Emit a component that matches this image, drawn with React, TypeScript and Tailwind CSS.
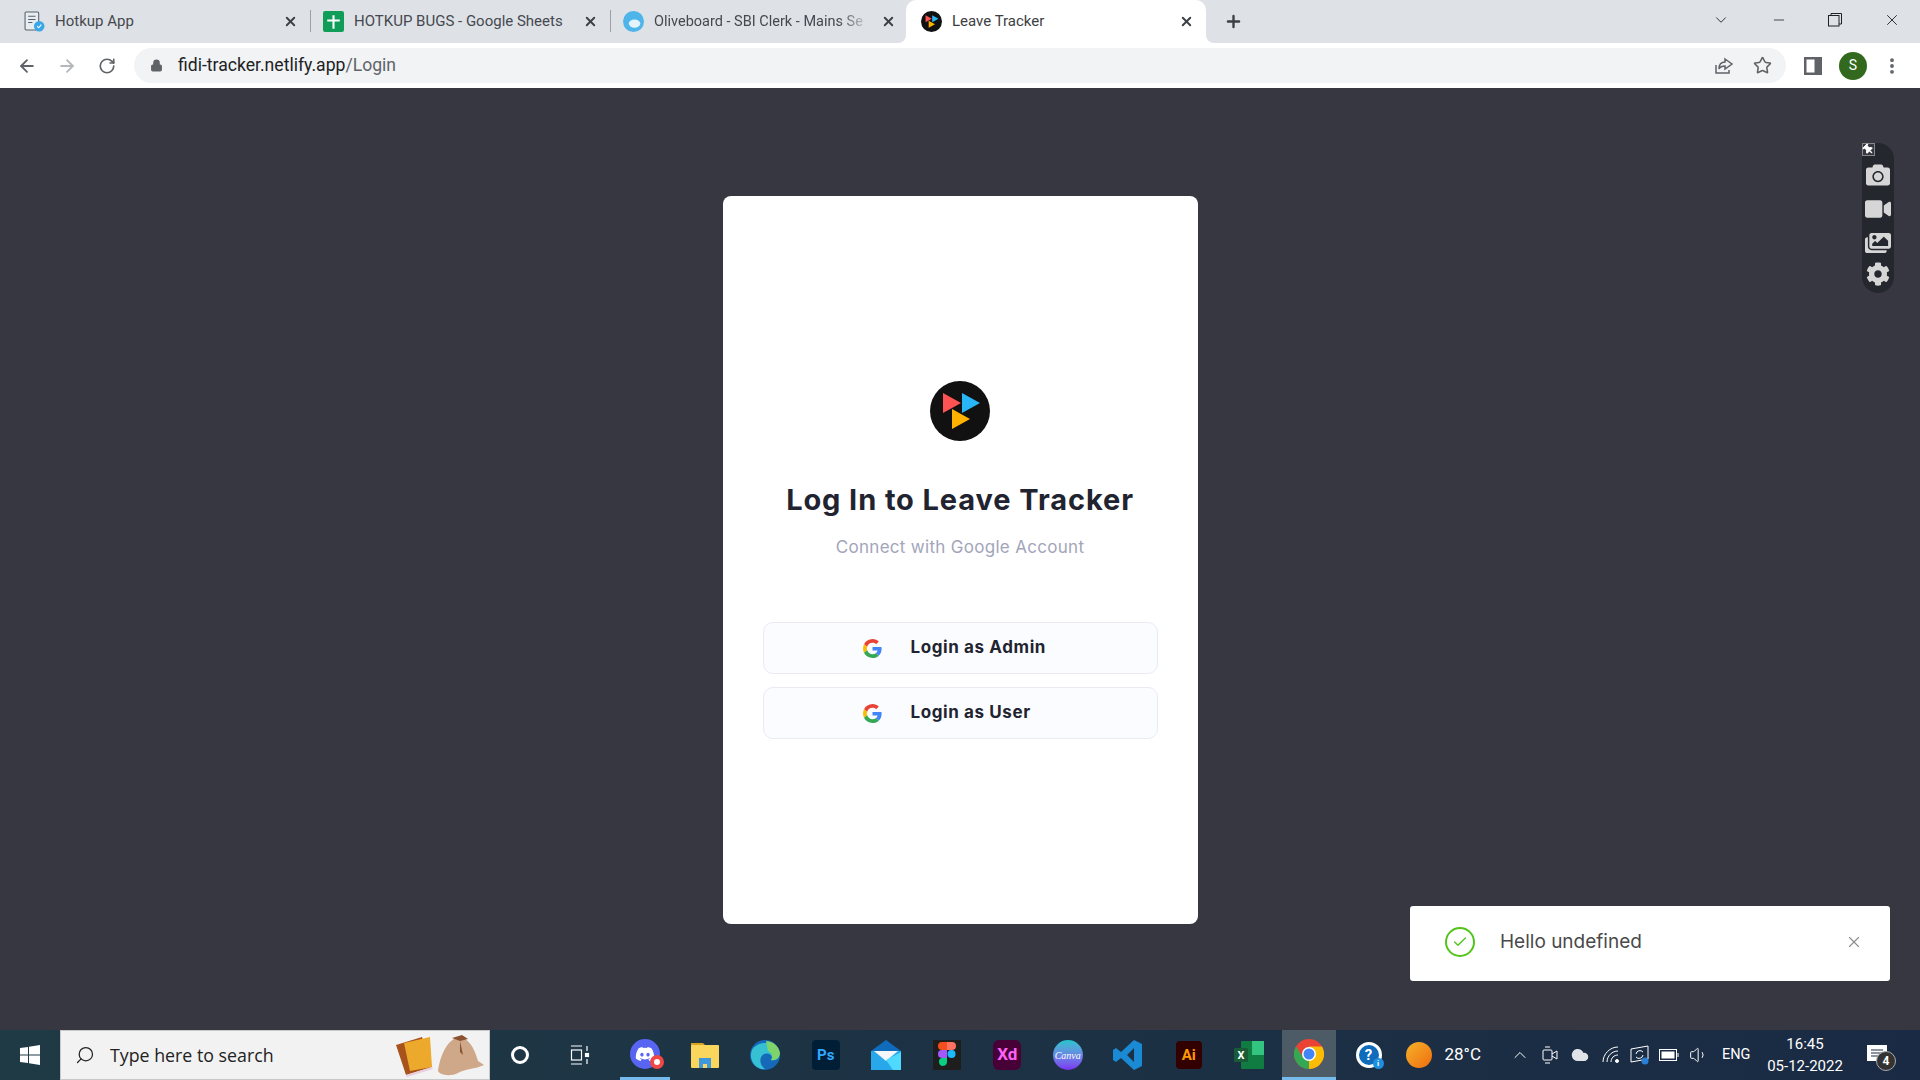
import React from 'react';
import { ArrowLeft, ArrowRight, RotateCw, Lock, Star, Plus, X, ChevronDown, Minus, EllipsisVertical, ChevronUp, Search, Volume1, Cloud, Check } from 'lucide-react';
import { FaDiscord, FaCamera, FaVideo, FaImages, FaCog, FaThumbtack } from 'react-icons/fa';

const uiFont = "font-['Roboto','Liberation_Sans',sans-serif]";
const appFont = "font-['Inter','Noto_Sans',sans-serif]";

const GoogleG: React.FC<{ className?: string }> = ({ className }) => (
  <svg viewBox="0 0 48 48" className={className}>
    <path fill="#EA4335" d="M24 9.5c3.54 0 6.71 1.22 9.21 3.6l6.85-6.85C35.9 2.38 30.47 0 24 0 14.62 0 6.51 5.38 2.56 13.22l7.98 6.19C12.43 13.72 17.74 9.5 24 9.5z" />
    <path fill="#4285F4" d="M46.98 24.55c0-1.57-.15-3.09-.38-4.55H24v9.02h12.94c-.58 2.96-2.26 5.48-4.78 7.18l7.73 6c4.51-4.18 7.09-10.36 7.09-17.65z" />
    <path fill="#FBBC05" d="M10.53 28.59c-.48-1.45-.76-2.99-.76-4.59s.27-3.14.76-4.59l-7.98-6.19C.92 16.46 0 20.12 0 24c0 3.88.92 7.54 2.56 10.78l7.97-6.19z" />
    <path fill="#34A853" d="M24 48c6.48 0 11.93-2.13 15.89-5.81l-7.73-6c-2.15 1.45-4.92 2.3-8.16 2.3-6.26 0-11.57-4.22-13.47-9.91l-7.98 6.19C6.51 42.62 14.62 48 24 48z" />
  </svg>
);

const TrackerLogo: React.FC<{ className?: string }> = ({ className }) => (
  <svg viewBox="0 0 60 60" className={className}>
    <circle cx="30" cy="30" r="30" fill="#111111" />
    <polygon points="13,12 31,22 13,32" fill="#ff5252" />
    <polygon points="32,12 50,22 32,32" fill="#29b6f6" />
    <polygon points="22,28 40,38 22,48" fill="#ffb300" />
  </svg>
);

const tabs = [
  { title: 'Hotkup App', width: 'w-[299px] pr-[13px]', text: 'text-[15px]', icon: (
    <svg viewBox="0 0 20 20" className="h-[21px] w-[21px]">
      <rect x="1" y="1" width="13" height="17" rx="1" fill="#e8edf2" stroke="#56606b" />
      <path d="M4 5h7M4 8h7M4 11h4" stroke="#56606b" />
      <circle cx="14.5" cy="14.5" r="5" fill="#3aa8e8" />
      <path d="M12.5 14.5l1.5 1.5 2.5-3" stroke="#fff" fill="none" />
    </svg>
  ) },
  { title: 'HOTKUP BUGS - Google Sheets', width: 'w-[300px] pr-[13px]', text: 'text-[15px]', icon: (
    <svg viewBox="0 0 20 20" className="h-[21px] w-[21px]">
      <rect width="20" height="20" rx="2" fill="#0f9d58" />
      <path d="M9 4h2v4h5v2h-5v7H9v-7H4V8h5z" fill="#fff" />
    </svg>
  ) },
  // text fades out against the close button, same as Chrome does when a title is too long
  { title: 'Oliveboard - SBI Clerk - Mains Se', width: 'w-[295px] pr-[10px]', text: 'text-[14.5px] [mask-image:linear-gradient(to_right,black_85%,transparent)]', icon: (
    <svg viewBox="0 0 20 20" className="h-[21px] w-[21px]">
      <circle cx="10" cy="10" r="10" fill="#4db5ea" />
      <ellipse cx="11" cy="12" rx="5.5" ry="4" fill="#e4f4fc" />
    </svg>
  ) },
];

const BrowserChrome: React.FC = () => (
  <div className={uiFont}>
    <div className="flex h-[43px] items-center bg-[#dee1e6] pl-3">
      {tabs.map((tab, i) => (
        <div key={tab.title} className={`relative flex h-full items-center gap-[10px] pl-3 ${tab.width}`}>
          {tab.icon}
          <span className={`flex-1 whitespace-nowrap text-[#45494f] ${tab.text}`}>{tab.title}</span>
          <X className="h-[15px] w-[15px] text-[#3c4043]" strokeWidth={3} />
          {i < 2 && <span className="absolute right-0 top-[10px] h-[22px] w-px bg-[#9aa0a6]" />}
        </div>
      ))}
      <div className="relative flex h-full w-[300px] items-center gap-[10px] rounded-t-[10px] bg-white pl-[15px] pr-[12px]">
        <span className="absolute -left-2 bottom-0 h-2 w-2 bg-white" />
        <span className="absolute -left-2 bottom-0 h-2 w-2 rounded-br-lg bg-[#dee1e6]" />
        <span className="absolute -right-2 bottom-0 h-2 w-2 bg-white" />
        <span className="absolute -right-2 bottom-0 h-2 w-2 rounded-bl-lg bg-[#dee1e6]" />
        <TrackerLogo className="h-[21px] w-[21px]" />
        <span className="flex-1 whitespace-nowrap text-[15px] text-[#3c4043]">Leave Tracker</span>
        <X className="h-[15px] w-[15px] text-[#3c4043]" strokeWidth={3} />
      </div>
      <Plus className="ml-[18px] h-[19px] w-[19px] text-[#3c4043]" strokeWidth={3} />
      <div className="ml-auto flex items-center">
        <ChevronDown className="mb-[4px] h-[18px] w-[18px] text-[#202124]" strokeWidth={1.2} />
        <Minus className="mb-[4px] ml-[41px] h-[16px] w-[16px] text-[#202124]" strokeWidth={1.2} />
        <svg viewBox="0 0 14 14" className="mb-[4px] ml-[41px] h-[14px] w-[14px]" fill="none" stroke="#202124">
          <rect x="0.5" y="2.5" width="10.5" height="10.5" />
          <path d="M3 2.5V.5h10.5V11h-2.5" />
        </svg>
        <X className="mb-[4px] ml-[41px] mr-[19px] h-[18px] w-[18px] text-[#202124]" strokeWidth={1.2} />
      </div>
    </div>
    <div className="flex h-[45px] items-center bg-white pl-[17px]">
      <ArrowLeft className="h-5 w-5 text-[#5f6368]" strokeWidth={2.2} />
      <ArrowRight className="ml-5 h-5 w-5 text-[#b4b7bb]" strokeWidth={2.2} />
      <RotateCw className="ml-[21px] h-[18px] w-[18px] text-[#5f6368]" strokeWidth={2.2} />
      <div className="ml-[18px] flex h-[35px] w-[1652px] items-center rounded-full bg-[#f1f3f4] pl-4 pr-[14px]">
        <Lock className="h-[13px] w-[13px] fill-[#5f6368] text-[#5f6368]" />
        <span className="ml-[15px] text-[17.6px] text-[#202124]">fidi-tracker.netlify.app<span className="text-[#5f6368]">/Login</span></span>
        <svg viewBox="0 0 20 20" className="ml-auto h-5 w-5" fill="none" stroke="#5f6368" strokeWidth="1.5">
          <path d="M2 9v8h13v-3" />
          <path d="M11 3l7 5-7 5v-3c-3 0-5 1-6 3 0-4 2-7 6-7z" />
        </svg>
        <Star className="ml-[19px] h-[19px] w-[19px] text-[#5f6368]" strokeWidth={2} />
      </div>
      <svg viewBox="0 0 18 18" className="ml-[18px] h-[18px] w-[18px]">
        <rect width="18" height="18" fill="#5f6368" />
        <rect x="2.5" y="2.5" width="8" height="13" fill="#fff" />
      </svg>
      <span className="ml-[17px] flex h-7 w-7 items-center justify-center rounded-full bg-[#33691e] text-[14px] text-white">S</span>
      <EllipsisVertical className="ml-[15px] h-5 w-5 text-[#5f6368]" strokeWidth={2.6} />
    </div>
  </div>
);

const ExtensionBar: React.FC = () => (
  <div className="absolute right-[26px] top-[55px] flex h-[150px] w-8 flex-col items-center rounded-2xl bg-[#24272e] text-[#d6d6d6]">
    <div className="absolute left-0 top-0 flex h-[13px] w-[13px] items-center justify-center border border-[#888] bg-[#373741]">
      <FaThumbtack className="h-[11px] w-[11px] -rotate-45 text-white" />
    </div>
    <FaCamera className="mt-[20px] h-6 w-6" />
    <FaVideo className="mt-[9px] h-[26px] w-[26px]" />
    <FaImages className="mt-[8px] h-[26px] w-[26px]" />
    <FaCog className="mt-[6px] h-6 w-6" />
  </div>
);

const LoginButton: React.FC<{ label: string }> = ({ label }) => (
  <button className="flex h-[52px] w-full items-center rounded-[10px] border border-[#e9ebf0] bg-[#fbfcff] pl-[99px]">
    <GoogleG className="h-[19px] w-[19px]" />
    <span className="ml-[29px] text-[17px] font-bold tracking-[0.6px] text-[#1f2430]">{label}</span>
  </button>
);

const LoginCard: React.FC = () => (
  <div className={`flex h-[728px] w-[475px] flex-col items-center rounded-lg bg-white px-10 pt-[185px] ${appFont}`}>
    <TrackerLogo className="h-[60px] w-[60px]" />
    <h1 className="mt-[41px] text-[29px] font-bold leading-[36px] tracking-[0.9px] text-[#1f2430]">Log In to Leave Tracker</h1>
    <p className="mt-[17px] text-[17px] leading-[24px] tracking-[0.3px] text-[#a3a5ba]">Connect with Google Account</p>
    <div className="mt-[63px] flex w-[395px] flex-col gap-[13px]">
      <LoginButton label="Login as Admin" />
      <LoginButton label="Login as User" />
    </div>
  </div>
);

const Toast: React.FC = () => (
  <div className={`absolute bottom-[49px] right-[30px] flex h-[75px] w-[480px] items-center rounded-[3px] bg-white pb-[3px] pl-[35px] pr-[27px] ${appFont}`}>
    <span className="flex h-[30px] w-[30px] items-center justify-center rounded-full border-2 border-[#52c41a]">
      <Check className="h-4 w-4 text-[#52c41a]" strokeWidth={2} />
    </span>
    <span className="ml-[25px] flex-1 text-[19px] text-[#4a4a4a]">Hello undefined</span>
    <X className="h-[18px] w-[18px] text-[#8c8c8c]" strokeWidth={1.5} />
  </div>
);

const slot = 'flex h-full w-[60.5px] shrink-0 items-center justify-center';

const Taskbar: React.FC = () => (
  <div className={`flex h-[50px] items-center bg-gradient-to-r from-[#1f3a44] to-[#1a2a44] text-white ${uiFont}`}>
    <div className="flex h-full w-[60px] shrink-0 items-center justify-center">
      <svg viewBox="0 0 20 20" className="h-5 w-5" fill="#fff">
        <path d="M0 3l8-1v7.500H0zM9 1.800L20 0v9.500H9zM0 10.500h8V18l-8-1zM9 10.500h11V20L9 18.200z" />
      </svg>
    </div>
    <div className="flex h-full w-[430px] shrink-0 items-center border border-[#c8c8c8] bg-[#f2f2f2] pl-[14px] text-[#222]">
      <Search className="h-5 w-5 -scale-x-100" strokeWidth={1.5} />
      <span className="ml-[15px] font-['Open_Sans',sans-serif] text-[17.8px]">Type here to search</span>
      <svg viewBox="0 0 92 44" className="ml-auto mr-[3px] h-[44px] w-[92px]">
        <polygon points="2,12 28,4 38,34 12,42" fill="#a8521c" />
        <polygon points="10,10 36,4 38,34 16,38" fill="#eda92c" />
        <path d="M12 42l26-8 1 2-26 8z" fill="#e8cfe0" />
        <path d="M44 38c2-14 8-30 20-34 10 0 16 10 20 24l6 4c-8 4-20 4-26 8-8 4-18 2-20-2z" fill="#cfa88a" />
        <path d="M58 5l10-3 6 4-8 2zM66 8l3 14-3-3z" fill="#8a5230" />
      </svg>
    </div>
    <div className="flex h-full w-[60px] shrink-0 items-center justify-center"><span className="h-[18px] w-[18px] rounded-full border-[3px] border-white" /></div>
    <div className="flex h-full w-[60px] shrink-0 items-center justify-center">
      <svg viewBox="0 0 20 20" className="h-5 w-5" fill="none" stroke="#fff" strokeWidth="1.200">
        <path d="M1 1h11M1 19h11" /><rect x="1.500" y="5" width="10" height="10" /><path d="M17 1v5M17 14v5" /><rect x="15.500" y="8.500" width="3" height="3" fill="#fff" />
      </svg>
    </div>
    <div className="relative ml-[10px] flex h-full w-[50px] shrink-0 items-center justify-center border-b-[3px] border-[#76b9ed]">
      <span className="flex h-[30px] w-[30px] items-center justify-center rounded-full bg-[#5865f2]"><FaDiscord className="h-5 w-5 text-white" /></span>
      <span className="absolute bottom-[8px] right-[6px] h-[14px] w-[14px] rounded-full border-[4px] border-[#f04747] bg-white" />
    </div>
    <div className="ml-[5px] flex h-full w-[60px] shrink-0 items-center justify-center">
      <svg viewBox="0 0 28 30" className="h-[30px] w-[28px]">
        <path d="M0 3h12l3 3H0z" fill="#d9a520" />
        <rect y="5" width="28" height="23" rx="1" fill="#fbd65c" />
        <path d="M8 28V18h12v10h-4v-4h-4v4z" fill="#3f97dc" />
      </svg>
    </div>
    <div className={slot}>
      <svg viewBox="0 0 30 30" className="h-[30px] w-[30px]">
        <circle cx="15" cy="15" r="15" fill="#1668b8" />
        <path d="M2 10C5 3 22-2 29 11c2 8-3 10-8 9 3-4-2-8-7-6-5 3-5 10 1 15C6 30-2 20 2 10z" fill="#35c1d3" />
        <path d="M16 1c7 0 13 5 14 12 0 5-5 8-9 7 3-4 0-8-3-9z" fill="#7fd36a" />
      </svg>
    </div>
    <div className={slot}><span className="flex h-[30px] w-[28px] items-center justify-center rounded bg-[#001e36] text-[15px] font-bold text-[#31a8ff]">Ps</span></div>
    <div className={slot}>
      <svg viewBox="0 0 30 30" className="h-[30px] w-[30px]">
        <polygon points="0,11 15,0 30,11 30,14 0,14" fill="#0f6cbd" />
        <rect y="11" width="30" height="19" fill="#28a8ea" />
        <polygon points="3,11 27,11 15,21" fill="#f4f6f8" />
        <polygon points="15,20 30,12 30,30 22,30" fill="#50d9ff" />
      </svg>
    </div>
    <div className={slot}>
      <svg viewBox="0 0 28 30" className="h-[30px] w-[28px]">
        <rect width="28" height="30" fill="#1e1e1e" />
        <path d="M9 2h5v8H9a4 4 0 010-8z" fill="#f24e1e" />
        <path d="M14 2h5a4 4 0 010 8h-5z" fill="#ff7262" />
        <path d="M9 10h5v8H9a4 4 0 010-8z" fill="#a259ff" />
        <circle cx="18.500" cy="14" r="4" fill="#1abcfe" />
        <path d="M9 18h5v4a4 4 0 11-5-4z" fill="#0acf83" />
      </svg>
    </div>
    <div className={slot}><span className="flex h-[30px] w-[28px] items-center justify-center rounded-md bg-[#470137] text-[17px] font-bold text-[#ff61f6]">Xd</span></div>
    <div className={slot}><span className="flex h-[30px] w-[30px] items-center justify-center rounded-full bg-gradient-to-b from-[#1bc4cc] to-[#7b2ff2] font-['Liberation_Serif',serif] text-[10px] italic text-white">Canva</span></div>
    <div className={slot}>
      <svg viewBox="0 0 30 30" className="h-[30px] w-[30px]">
        <path d="M21 0l8 4v22l-8 4L8 18l-5 4-3-2v-10l3-2 5 4zM21 8l-7 7 7 7z" fill="#1a8ad4" fillRule="evenodd" />
      </svg>
    </div>
    <div className={slot}><span className="flex h-[28px] w-[26px] items-center justify-center rounded bg-[#330000] text-[15px] font-bold text-[#ff9a00]">Ai</span></div>
    <div className={slot}>
      <svg viewBox="0 0 30 30" className="h-[30px] w-[30px]">
        <rect x="7" y="1" width="23" height="28" rx="1" fill="#107c41" />
        <rect x="18" y="1" width="12" height="14" fill="#33c481" />
        <rect y="8" width="14" height="14" rx="1" fill="#185c37" />
        <text x="7" y="19" textAnchor="middle" fontSize="11" fontWeight="700" fill="#fff">X</text>
      </svg>
    </div>
    <div className="ml-[2px] flex h-full w-[54px] shrink-0 items-center justify-center border-b-[3px] border-[#76b9ed] bg-[#4d5b67]">
      <svg viewBox="0 0 30 30" className="h-[30px] w-[30px]">
        <circle cx="15" cy="15" r="15" fill="#ea4335" />
        <path d="M15 15L2 22.500A15 15 0 0015 30l7-12z" fill="#34a853" />
        <path d="M15 30a15 15 0 0013-22.500H15z" fill="#fbbc05" />
        <path d="M2 22.500A15 15 0 012 7.500l8 12z" fill="#34a853" />
        <circle cx="15" cy="15" r="7" fill="#fff" />
        <circle cx="15" cy="15" r="5.500" fill="#4285f4" />
      </svg>
    </div>
    <div className="flex h-full flex-1 items-center pl-[20px]">
      <span className="relative flex h-[26px] w-[26px] items-center justify-center rounded-full border-[3px] border-white bg-[#0f6cbd] text-[15px] font-bold">
        ?
        <span className="absolute -bottom-[4px] -right-[5px] flex h-[11px] w-[11px] items-center justify-center rounded-full bg-[#1f8fe0] text-[8px]">i</span>
      </span>
      <span className="ml-[24px] h-[26px] w-[26px] rounded-full bg-gradient-to-br from-[#f4b12a] to-[#ee6c0c]" />
      <span className="ml-[13px] text-[17px]">28°C</span>
      <ChevronUp className="ml-[29px] h-5 w-5" strokeWidth={1.2} />
      <svg viewBox="0 0 16 20" className="ml-[12px] h-5 w-4" fill="none" stroke="#fff">
        <rect x="1" y="5" width="9" height="10" rx="1" /><path d="M10 9l5-3v8l-5-3M3 2h5M3 18h5" />
      </svg>
      <Cloud className="ml-[13px] h-[18px] w-[18px] fill-[#e0e4e8] text-[#e0e4e8]" />
      <svg viewBox="0 0 18 18" className="ml-[13px] h-[18px] w-[18px]" fill="none" stroke="#fff" strokeWidth="1">
        <path d="M1 16C1 8 8 1 16 1M5 16c0-6 5-11 11-11M9 16c0-4 3-7 7-7" />
        <circle cx="15" cy="15" r="1.500" fill="#fff" />
      </svg>
      <svg viewBox="0 0 20 20" className="ml-[10px] h-5 w-5" fill="none" stroke="#fff">
        <path d="M1 4l17-3v13L1 17z" /><path d="M6 9a4 4 0 017-2M13 10a4 4 0 01-7 2" />
        <circle cx="15" cy="16" r="3.500" fill="#2b7fd6" stroke="none" />
      </svg>
      <svg viewBox="0 0 20 12" className="ml-[9px] h-3 w-5" fill="none" stroke="#fff">
        <rect x=".5" y=".5" width="17" height="11" /><rect x="2.500" y="2.500" width="13" height="7" fill="#fff" stroke="none" /><path d="M19 4v4" />
      </svg>
      <Volume1 className="ml-[10px] h-5 w-5" strokeWidth={1.2} />
      <span className="ml-[13px] w-[30px] whitespace-nowrap text-[14.5px]">ENG</span>
      <div className="ml-[13px] flex w-[80px] flex-col items-center text-[15px] leading-[22px]">
        <span>16:45</span>
        <span>05-12-2022</span>
      </div>
      <div className="relative ml-[22px] h-[20px] w-5">
        <svg viewBox="0 0 20 20" className="h-5 w-5" fill="#fff">
          <path d="M0 0h20v16H0z" /><path d="M4 5h12M4 8h12M4 11h8" stroke="#1a2a44" strokeWidth="1" />
        </svg>
        <span className="absolute -bottom-[6px] -right-[9px] flex h-[20px] w-[20px] items-center justify-center rounded-full border border-[#aaa] bg-[#333] text-[12px] font-bold">4</span>
      </div>
    </div>
  </div>
);

export default function App() {
  return (
    <div className="flex h-[1080px] w-[1920px] flex-col overflow-hidden">
      <BrowserChrome />
      <main className="relative flex flex-1 items-start justify-center bg-[#373741] pt-[108px]">
        <LoginCard />
        <ExtensionBar />
        <Toast />
      </main>
      <Taskbar />
    </div>
  );
}
